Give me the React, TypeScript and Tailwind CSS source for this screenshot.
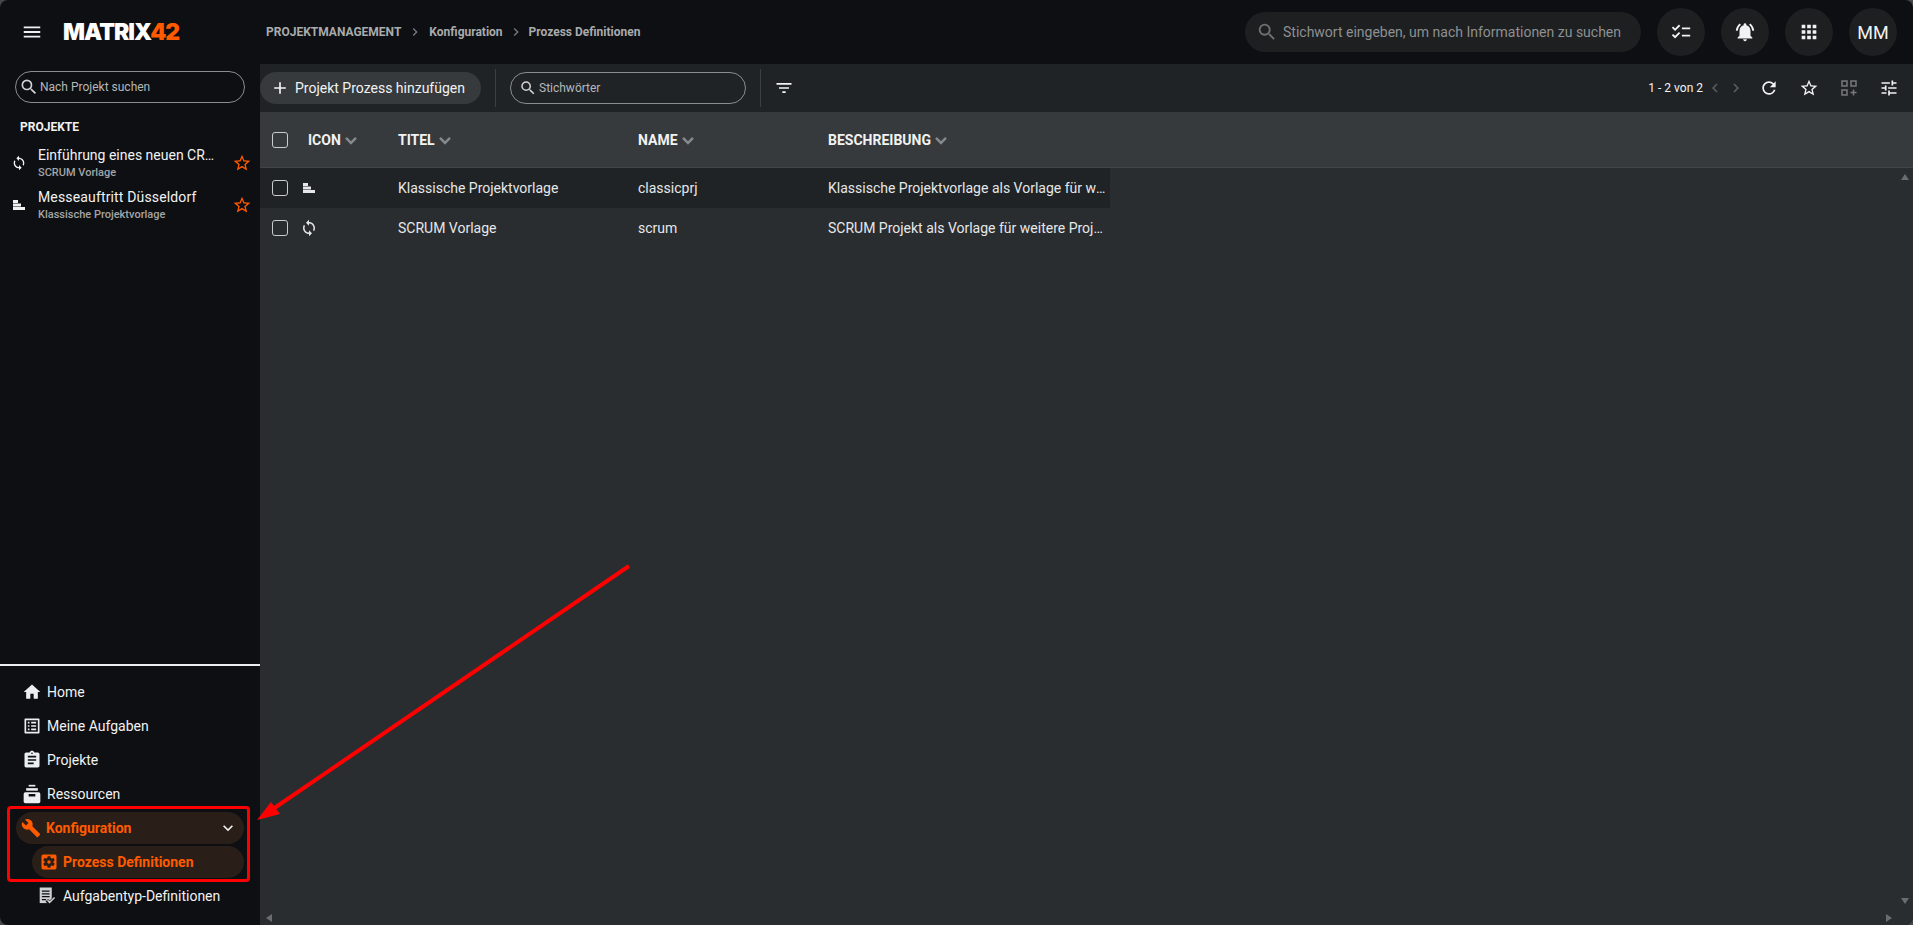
import React from "react";
import {
  MdAdd,
  MdApps,
  MdAssignment,
  MdBuild,
  MdChecklist,
  MdChevronLeft,
  MdChevronRight,
  MdFilterList,
  MdHome,
  MdKeyboardArrowDown,
  MdListAlt,
  MdMenu,
  MdNotificationsActive,
  MdRefresh,
  MdSearch,
  MdSettingsApplications,
  MdStarBorder,
  MdSync,
  MdTune,
} from "react-icons/md";

function ClassicIcon({ className }: { className?: string }) {
  return (
    <svg viewBox="0 0 12 12" className={className} fill="currentColor">
      <rect x="0" y="1" width="5" height="3" />
      <rect x="0" y="4.5" width="8" height="3" />
      <rect x="0" y="8" width="12" height="3" />
    </svg>
  );
}

function DrawerIcon() {
  return (
    <svg viewBox="0 0 24 24" className="h-[20px] w-[20px]" fill="currentColor">
      <rect x="8" y="1" width="8" height="2" />
      <rect x="5" y="5" width="14" height="3" />
      <path d="M2 12a2 2 0 0 1 2-2h16a2 2 0 0 1 2 2v9a2 2 0 0 1-2 2H4a2 2 0 0 1-2-2z" />
      <rect x="8" y="12" width="8" height="3" fill="#0d0f12" />
    </svg>
  );
}

function TaskTypeIcon() {
  return (
    <svg viewBox="0 0 24 24" className="h-[18px] w-[17px]" fill="currentColor">
      <rect x="1" y="0" width="17" height="22" />
      <g stroke="#0d0f12" strokeWidth="1.8">
        <path d="M4 5h11M4 9h11M4 13h11M4 17h6" />
      </g>
      <path d="M11 18l4 4 8-8" fill="none" stroke="#0d0f12" strokeWidth="5" />
      <path d="M12 18l3 3 7-7" fill="none" stroke="#cfd2d4" strokeWidth="2" />
    </svg>
  );
}

function ProjectItem({
  icon,
  title,
  sub,
  titleClass,
}: {
  icon: React.ReactNode;
  title: string;
  sub: string;
  titleClass?: string;
}) {
  return (
    <div className="flex h-[42px] items-center pl-[11px] pr-[8px]">
      <span className="flex w-[16px] shrink-0 justify-center text-[#f2f2f2]">{icon}</span>
      <div className="ml-[11px] min-w-0 flex-1">
        <div className={`truncate text-[14px] leading-[20px] text-[#f2f2f2] ${titleClass ?? ""}`}>{title}</div>
        <div className="truncate text-[11px] font-medium leading-[16px] text-[#a3a5a7]">{sub}</div>
      </div>
      <MdStarBorder className="ml-[7px] shrink-0 text-[#ff5a00]" size={20} />
    </div>
  );
}

function NavItem({ icon, label }: { icon: React.ReactNode; label: string }) {
  return (
    <div className="flex h-[34px] items-center pl-[22px] text-[14px] text-[#f2f2f2]">
      <span className="flex w-[20px] justify-center text-[#eceff1]">{icon}</span>
      <span className="ml-[5px]">{label}</span>
    </div>
  );
}

function HeadCell({ label, className }: { label: string; className: string }) {
  return (
    <div className={`flex shrink-0 items-center ${className}`}>
      <span className="text-[14px] font-bold text-[#f2f2f2]">{label}</span>
      <svg viewBox="0 0 24 24" className="h-[20px] w-[20px] text-[#85898c]" fill="none" stroke="currentColor" strokeWidth="3">
        <path d="M6 9.5l6 6 6-6" />
      </svg>
    </div>
  );
}

function Checkbox() {
  return <span className="block h-[16px] w-[16px] rounded-[3px] border border-[#c9cbcd]" />;
}

function RoundButton({ children }: { children: React.ReactNode }) {
  return (
    <div className="flex h-[48px] w-[48px] items-center justify-center rounded-full bg-[#1d1f21] text-[#f2f2f2]">
      {children}
    </div>
  );
}

function Row({
  icon,
  title,
  name,
  desc,
  dark,
}: {
  icon: React.ReactNode;
  title: string;
  name: string;
  desc: string;
  dark?: boolean;
}) {
  return (
    <div className={`flex h-[40px] w-[850px] items-center text-[14px] text-[#e6e7e8] ${dark ? "bg-[#1f2326]" : ""}`}>
      <div className="w-[40px] pl-[12px]">
        <Checkbox />
      </div>
      <div className="w-[98px]">
        <div className="flex w-[18px] justify-center">{icon}</div>
      </div>
      <div className="w-[240px]">{title}</div>
      <div className="w-[190px]">{name}</div>
      <div className="w-[282px] truncate pr-[3px]">{desc}</div>
    </div>
  );
}

export default function App() {
  return (
    <div className="h-screen w-full overflow-hidden bg-[#45484a]">
      <div className="relative flex h-full w-full overflow-hidden rounded-[8px] bg-[#0d0f12] font-['Roboto',sans-serif]">
        {/* Sidebar */}
        <aside className="flex w-[260px] shrink-0 flex-col">
          <div className="flex h-[64px] items-center pl-[21px]">
            <MdMenu className="text-[#f2f2f2]" size={22} />
            <span className="ml-[20px] font-['Inter',sans-serif] text-[23px] font-black leading-none tracking-[-1px] text-white">
              MATRIX<span className="text-[#ff5a00]">42</span>
            </span>
          </div>
          <div className="px-[15px] pt-[7px]">
            <div className="flex h-[32px] items-center rounded-full border border-[#8a8c8e] pl-[3px] text-[12px] text-[#b5b7b9]">
              <MdSearch size={20} className="text-[#d0d1d2]" />
              <span className="ml-[1px]">Nach Projekt suchen</span>
            </div>
          </div>
          <div className="pl-[20px] pt-[16px] text-[12px] font-bold leading-[16px] text-[#f2f2f2]">PROJEKTE</div>
          <div className="pt-[7px]">
            <ProjectItem
              icon={<MdSync size={18} />}
              title="Einführung eines neuen CRM-Systems"
              sub="SCRUM Vorlage"
              titleClass="mr-[5px]"
            />
            <ProjectItem
              icon={<ClassicIcon className="h-[12px] w-[12px]" />}
              title="Messeauftritt Düsseldorf"
              sub="Klassische Projektvorlage"
              titleClass="tracking-[0.15px]"
            />
          </div>

          <div className="mt-auto border-t-2 border-[#eceeef] pt-[9px]">
            <NavItem icon={<MdHome size={20} />} label="Home" />
            <NavItem icon={<MdListAlt size={20} />} label="Meine Aufgaben" />
            <NavItem icon={<MdAssignment size={20} />} label="Projekte" />
            <NavItem icon={<DrawerIcon />} label="Ressourcen" />
            <div className="flex h-[34px] items-center px-[16px]">
              <div className="flex h-[32px] flex-1 items-center rounded-full bg-[#2a1f18] pl-[5px] pr-[6px] text-[14px] font-bold text-[#ff5a00]">
                <MdBuild size={20} />
                <span className="ml-[5px] flex-1">Konfiguration</span>
                <MdKeyboardArrowDown className="text-[#f2f2f2]" size={20} />
              </div>
            </div>
            <div className="flex h-[34px] items-center pl-[32px] pr-[16px]">
              <div className="flex h-[32px] flex-1 items-center rounded-full bg-[#2a1f18] pl-[7px] text-[14px] font-bold text-[#ff5a00]">
                <MdSettingsApplications size={20} />
                <span className="ml-[4px]">Prozess Definitionen</span>
              </div>
            </div>
            <div className="flex h-[34px] items-center pl-[39px] text-[14px] text-[#f2f2f2]">
              <span className="text-[#cfd2d4]">
                <TaskTypeIcon />
              </span>
              <span className="ml-[7px]">Aufgabentyp-Definitionen</span>
            </div>
            <div className="h-[12px]" />
          </div>
        </aside>

        {/* Main */}
        <div className="flex min-w-0 flex-1 flex-col">
          <header className="flex h-[64px] shrink-0 items-center pr-[16px]">
            <nav className="flex items-center pl-[6px] text-[12px] font-bold text-[#a9abad]">
              <span>PROJEKTMANAGEMENT</span>
              <MdChevronRight className="mx-[6px] text-[#77797b]" size={16} />
              <span>Konfiguration</span>
              <MdChevronRight className="mx-[5px] text-[#77797b]" size={16} />
              <span>Prozess Definitionen</span>
            </nav>
            <div className="ml-auto flex items-center gap-[16px]">
              <div className="flex h-[40px] w-[396px] items-center rounded-full bg-[#1d1f21] pl-[11px] text-[14px] text-[#8e9092]">
                <MdSearch size={22} className="text-[#6f7173]" />
                <span className="ml-[5px]">Stichwort eingeben, um nach Informationen zu suchen</span>
              </div>
              <RoundButton>
                <MdChecklist size={22} />
              </RoundButton>
              <RoundButton>
                <MdNotificationsActive size={22} />
              </RoundButton>
              <RoundButton>
                <MdApps size={22} />
              </RoundButton>
              <RoundButton>
                <span className="text-[18px]">MM</span>
              </RoundButton>
            </div>
          </header>

          <div className="flex min-h-0 flex-1 flex-col bg-[#292d30]">
            {/* Toolbar */}
            <div className="flex h-[48px] shrink-0 items-center bg-[#1f2326]">
              <div className="flex h-[32px] w-[221px] items-center rounded-full bg-[#363a3d] pl-[10px] text-[14px] text-[#f2f2f2]">
                <MdAdd size={20} />
                <span className="ml-[5px]">Projekt Prozess hinzufügen</span>
              </div>
              <div className="ml-[14px] h-[38px] w-px bg-[#3c4043]" />
              <div className="ml-[14px] flex h-[32px] w-[236px] items-center rounded-full border border-[#8a8c8e] pl-[8px] text-[12px] text-[#b5b7b9]">
                <MdSearch size={18} className="text-[#d0d1d2]" />
                <span className="ml-[2px]">Stichwörter</span>
              </div>
              <div className="ml-[14px] h-[38px] w-px bg-[#3c4043]" />
              <MdFilterList className="ml-[13px] text-[#f2f2f2]" size={20} />
              <div className="ml-auto flex items-center pr-[14px] text-[#f2f2f2]">
                <span className="text-[12px]">1 - 2 von 2</span>
                <MdChevronLeft className="ml-[3px] text-[#5b5e61]" size={18} />
                <MdChevronRight className="ml-[3px] text-[#5b5e61]" size={18} />
                <MdRefresh className="ml-[14px]" size={20} />
                <MdStarBorder className="ml-[20px]" size={20} />
                <svg
                  viewBox="0 0 16 16"
                  className="ml-[22px] h-[16px] w-[16px] text-[#77797b]"
                  fill="none"
                  stroke="currentColor"
                  strokeWidth="1.5"
                >
                  <rect x="1" y="1" width="5" height="5" />
                  <rect x="10" y="1" width="5" height="5" />
                  <rect x="1" y="10" width="5" height="5" />
                  <path d="M12.5 9.5v6M9.5 12.5h6" />
                </svg>
                <MdTune className="ml-[22px]" size={20} />
              </div>
            </div>

            {/* Table */}
            <div className="flex h-[56px] shrink-0 items-center border-b border-[#414548] bg-[#363a3d] pt-[1px]">
              <div className="w-[48px] shrink-0 pl-[12px]">
                <Checkbox />
              </div>
              <HeadCell label="ICON" className="w-[90px]" />
              <HeadCell label="TITEL" className="w-[240px]" />
              <HeadCell label="NAME" className="w-[190px]" />
              <HeadCell label="BESCHREIBUNG" className="w-[280px]" />
            </div>
            <div className="relative min-h-0 flex-1">
              <Row
                dark
                icon={<ClassicIcon className="h-[12px] w-[12px]" />}
                title="Klassische Projektvorlage"
                name="classicprj"
                desc="Klassische Projektvorlage als Vorlage für weitere Projekte"
              />
              <Row
                icon={<MdSync size={18} />}
                title="SCRUM Vorlage"
                name="scrum"
                desc="SCRUM Projekt als Vorlage für weitere Projekte"
              />
              {/* Scrollbar arrows */}
              <span className="absolute right-[4px] top-[6px] h-0 w-0 border-x-[4px] border-b-[6px] border-x-transparent border-b-[#6a6d70]" />
              <span className="absolute bottom-[21px] right-[4px] h-0 w-0 border-x-[4px] border-t-[6px] border-x-transparent border-t-[#6a6d70]" />
              <span className="absolute bottom-[3px] left-[6px] h-0 w-0 border-y-[4px] border-r-[6px] border-y-transparent border-r-[#6a6d70]" />
              <span className="absolute bottom-[3px] right-[21px] h-0 w-0 border-y-[4px] border-l-[6px] border-y-transparent border-l-[#6a6d70]" />
            </div>
          </div>
        </div>

        {/* Annotation */}
        <div className="pointer-events-none absolute left-[7px] top-[806px] h-[76px] w-[243px] rounded-[4px] border-[3px] border-[#ff0000]" />
        <svg className="pointer-events-none absolute left-0 top-0" width="1913" height="925">
          <line x1="629" y1="566" x2="270" y2="811" stroke="#ff0000" strokeWidth="4" />
          <polygon points="257,820 271,802 280,814" fill="#ff0000" />
        </svg>
      </div>
    </div>
  );
}
